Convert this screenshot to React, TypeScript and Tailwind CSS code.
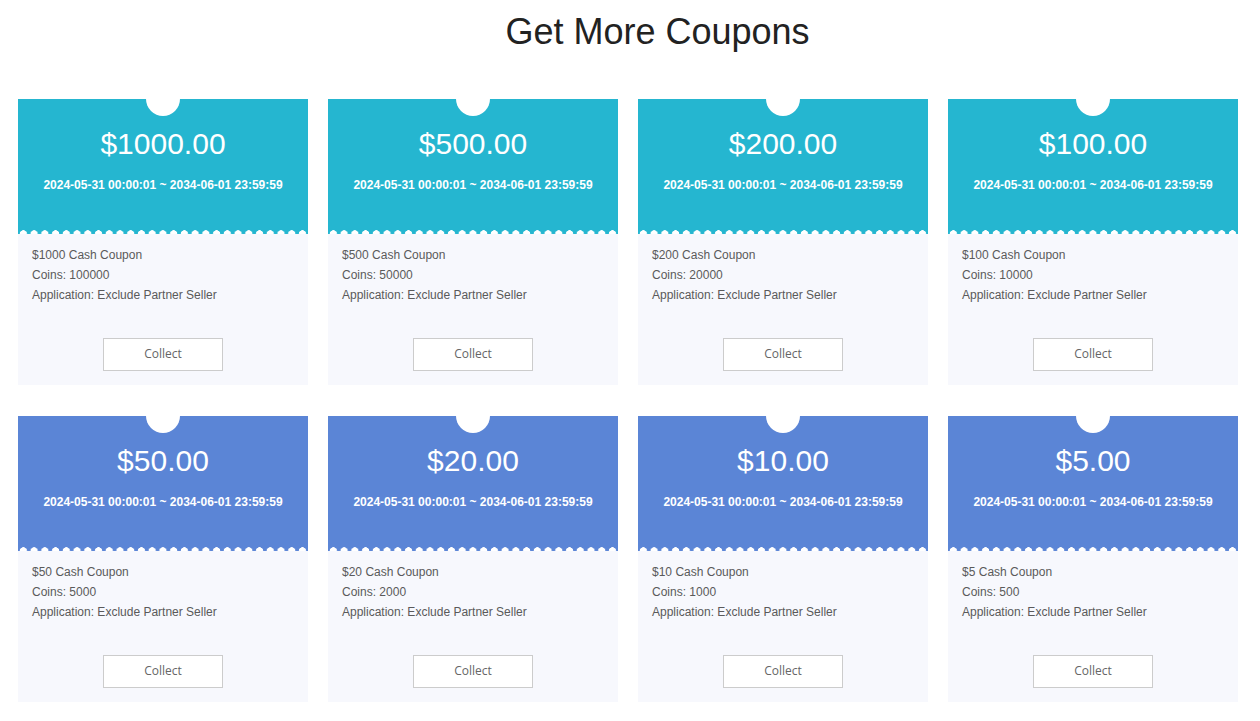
const coupons = [
  { amount: "1000", coins: "100000" },
  { amount: "500", coins: "50000" },
  { amount: "200", coins: "20000" },
  { amount: "100", coins: "10000" },
  { amount: "50", coins: "5000" },
  { amount: "20", coins: "2000" },
  { amount: "10", coins: "1000" },
  { amount: "5", coins: "500" },
];

function CouponCard({ amount, coins, blue }: { amount: string; coins: string; blue: boolean }) {
  return (
    <div className="w-[290px]">
      <div
        className={`relative h-[135px] flex flex-col items-center text-white ${
          blue ? "bg-[#5b85d6]" : "bg-[#25b6d0]"
        }`}
      >
        <div className="absolute -top-[17px] left-1/2 -translate-x-1/2 w-[34px] h-[34px] rounded-full bg-white" />
        <div className="pt-[28px] text-[30px] leading-[34px]">${amount}.00</div>
        <div className="mt-[16px] text-[12px] leading-[16px] font-bold">
          2024-05-31 00:00:01 ~ 2034-06-01 23:59:59
        </div>
        <div className="absolute bottom-0 left-0 right-0 h-[4px] bg-[radial-gradient(circle_at_50%_100%,#ffffff_3.5px,transparent_4px)] bg-[length:10.74px_4px] bg-repeat-x" />
      </div>
      <div className="h-[151px] bg-[#f7f8fd] px-[14px] pt-[11px] flex flex-col">
        <div className="text-[12px] leading-[20px] text-[#5a5a5a]">
          <div>${amount} Cash Coupon</div>
          <div>Coins: {coins}</div>
          <div>Application: Exclude Partner Seller</div>
        </div>
        <button className="mt-[33px] self-center w-[120px] h-[33px] border border-[#ccc] bg-white text-[12px] leading-[16px] pb-[2px] text-[#666] font-['Open_Sans',sans-serif]">
          Collect
        </button>
      </div>
    </div>
  );
}

export default function App() {
  return (
    <div className="min-h-screen bg-white font-['Liberation_Sans',Arial,sans-serif]">
      <h1 className="h-[99px] pt-[12px] pl-[55px] text-center text-[36px] leading-[40px] text-[#222]">
        Get More Coupons
      </h1>
      <div className="px-[18px] grid grid-cols-[repeat(4,290px)] gap-x-[20px] gap-y-[31px]">
        {coupons.map((c, i) => (
          <CouponCard key={c.amount} amount={c.amount} coins={c.coins} blue={i >= 4} />
        ))}
      </div>
    </div>
  );
}
